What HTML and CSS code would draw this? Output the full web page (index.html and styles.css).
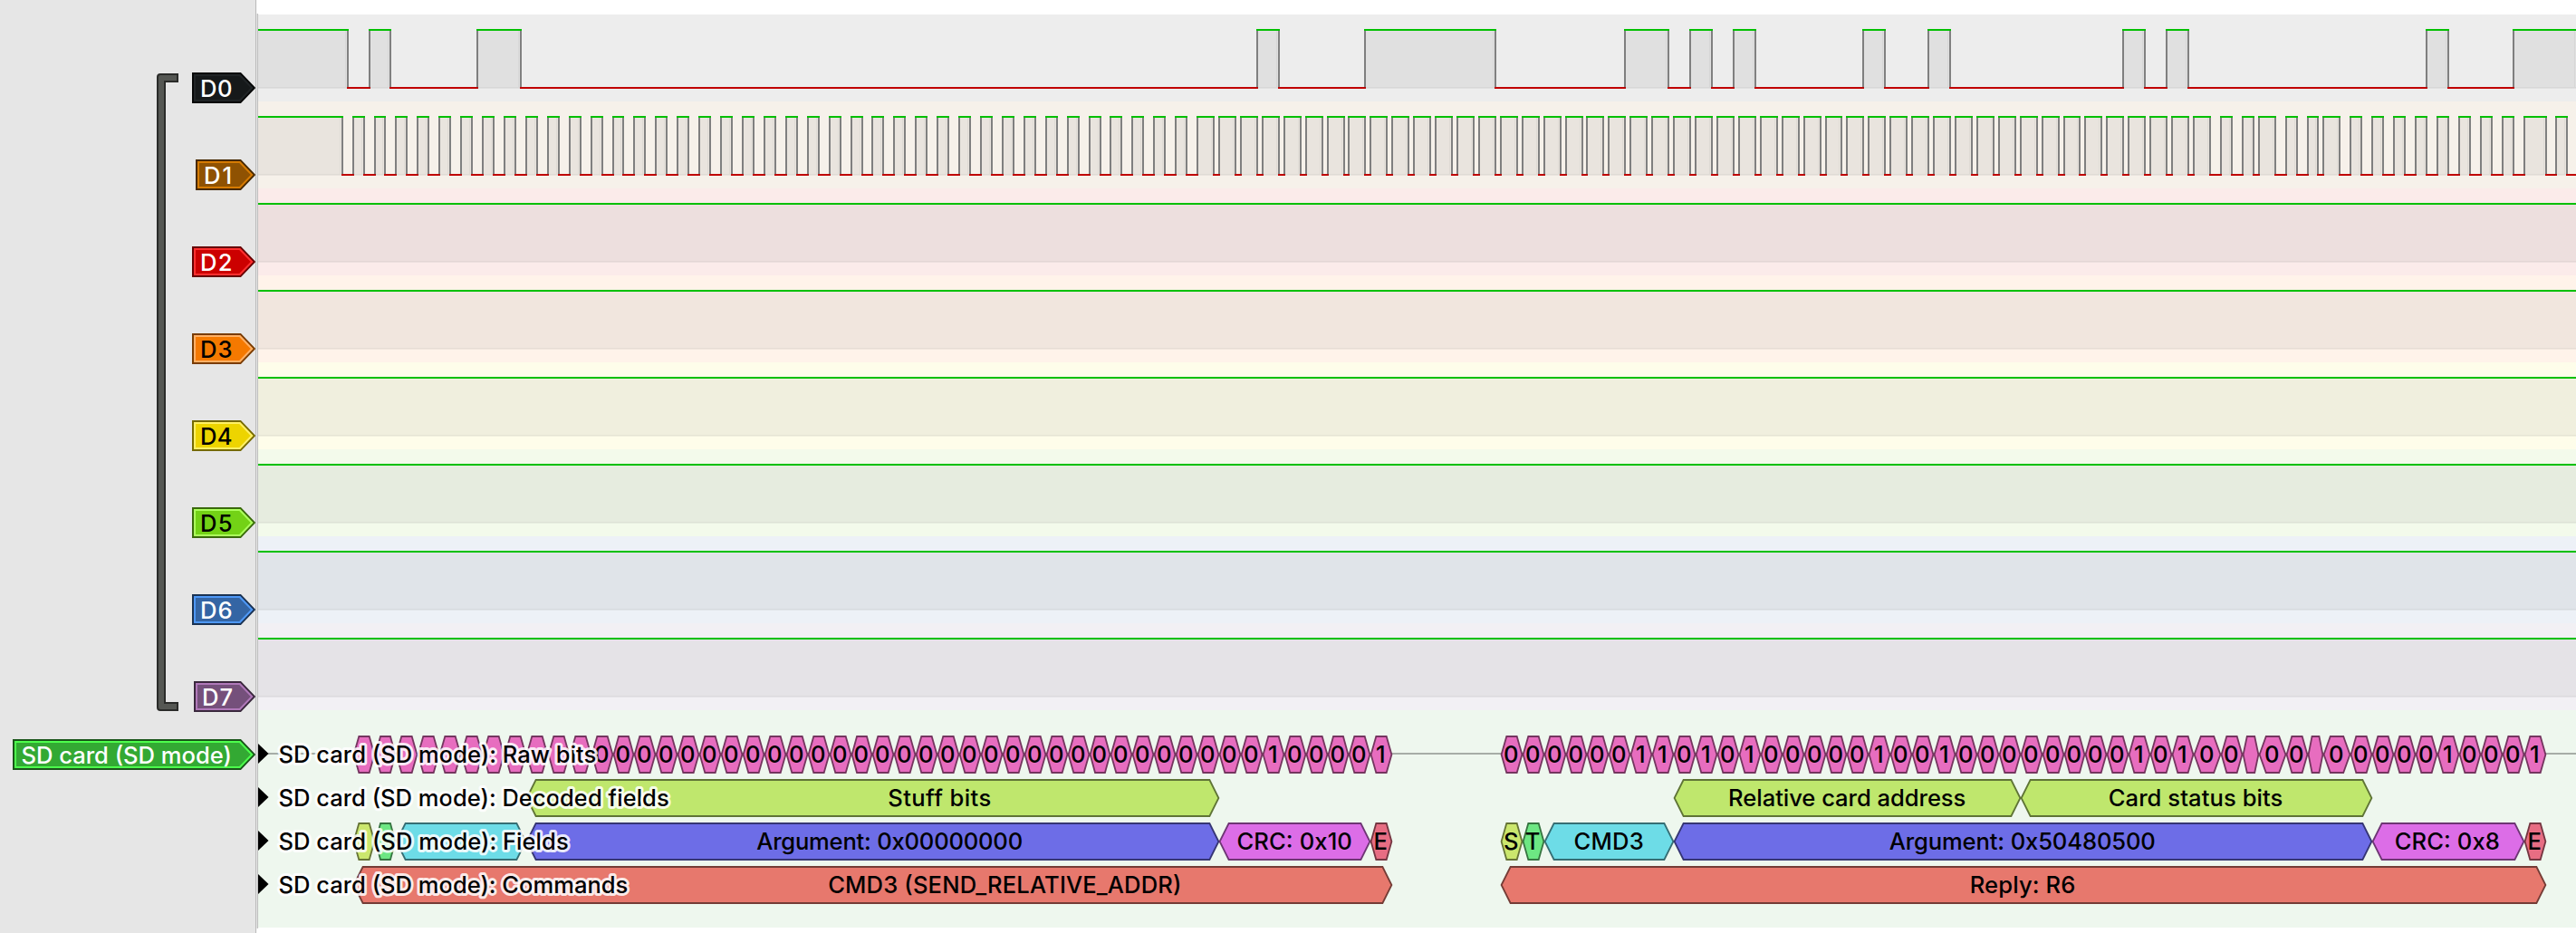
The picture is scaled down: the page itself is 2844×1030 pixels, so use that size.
FILE: index.html
```html
<!DOCTYPE html>
<html lang="en">
<head>
<meta charset="utf-8">
<title>SD card (SD mode)</title>
<link rel="stylesheet" href="styles.css">
</head>
<body>
<main class="viewer">
  <aside class="headers">
    <svg class="bracket" width="26" height="706" viewBox="172 80 26 706">
      <path d="M196 82V90H182V776H196V784H177Q174 784 174 781V85Q174 82 177 82Z"/>
    </svg>
    <div class="tags" id="tags"></div>
  </aside>
  <section class="view" id="view"></section>
</main>
<script src="app.js"></script>
</body>
</html>
```
FILE: styles.css
```css
body {
  margin: 0;
  background: #fff;
  font-family: Inter, "Liberation Sans", sans-serif;
  overflow: hidden;
}
svg {
  display: block;
}
text {
  font-size: 25.6px;
  white-space: pre;
}
.viewer {
  display: flex;
  height: 1030px;
}
.headers {
  display: flex;
  flex: none;
  box-sizing: border-box;
  width: 283px;
  background: #e6e6e6;
  border-right: 1px solid #b9b9b9;
}
.bracket {
  flex: none;
  margin: 80px 0 0 172px;
}
.bracket path {
  fill: #555753;
  stroke: #2a2b29;
  stroke-width: 2;
}
.tags {
  display: flex;
  flex-direction: column;
  align-items: flex-end;
  width: 84px;
  padding-top: 49px;
}
.tag {
  display: flex;
  flex: none;
  align-items: center;
  height: 96px;
}
.tag-decoder {
  height: 32px;
}
.tag text {
  font-weight: 500;
}
.view {
  flex: 1;
  box-sizing: border-box;
  margin: 15px 0 5px 1px;
  padding: 1px 0;
  border-left: 1px solid #bdbdbd;
  box-shadow: -1px 0 0 #e9e9e9;
}
.high {
  fill: #00c000;
}
.low {
  fill: #c00000;
}
.edge {
  fill: #808080;
}
.shade {
  fill: rgba(115, 122, 115, .1);
}
.base {
  fill: rgba(0, 0, 0, .04);
}
.decoder {
  background: #eef7ee;
}
.idle {
  fill: #a6ada6;
}
.field {
  stroke-width: 1.8;
}
.decoder text {
  font-weight: 450;
}
.row-title {
  stroke: #fff;
  stroke-opacity: .85;
  stroke-width: 6;
  stroke-linejoin: round;
  paint-order: stroke;
}
```
FILE: app.js
```js
const LEFT = 285, WIDTH = 2559;

// name, tag left edge, fill, highlight, outline, text colour, lane background
const channels = [
  ["D0", 212, "#16191a", "#202426", "#060707", "#fff", "#ededed"],
  ["D1", 216, "#8f5202", "#d67b03", "#472901", "#fff", "#f6f1ea"],
  ["D2", 212, "#cc0000", "#ff3030", "#660000", "#fff", "#fbebea"],
  ["D3", 212, "#f57900", "#ffb066", "#7a3c00", "#000", "#fff3ea"],
  ["D4", 212, "#edd400", "#fff066", "#766a00", "#000", "#fefdea"],
  ["D5", 212, "#73d216", "#acff5c", "#39690b", "#000", "#f3faeb"],
  ["D6", 212, "#3465a4", "#4e98f6", "#1a3252", "#fff", "#edf1f7"],
  ["D7", 214, "#75507b", "#b078b9", "#3a283d", "#fff", "#f2f0f4"]
];

// Alternating falling / rising edge positions; every line starts high.
const d0 = [383, 407, 430, 526, 574, 1387, 1411, 1506, 1650, 1793, 1841, 1865, 1889, 1913, 1937,
  2056, 2080, 2128, 2152, 2343, 2367, 2391, 2415, 2678, 2702, 2774];
const rises = [389, 413, 436, 460, 484, 508, 532, 556, 580, 604, 628, 652, 676, 699, 723, 747, 771, 795,
  819, 843, 867, 891, 915, 939, 962, 986, 1010, 1034, 1058, 1082, 1106, 1130, 1154, 1178, 1202, 1225,
  1249, 1273, 1297, 1321, 1345, 1369, 1393, 1417, 1441, 1465, 1488, 1512, 1536, 1560, 1584, 1608, 1632,
  1656, 1680, 1704, 1728, 1751, 1775, 1799, 1823, 1847, 1871, 1895, 1919, 1943, 1967, 1991, 2015, 2038,
  2062, 2086, 2110, 2134, 2158, 2182, 2206, 2230, 2254, 2278, 2301, 2325, 2349, 2373, 2397, 2421, 2451,
  2475, 2493, 2523, 2547, 2564, 2594, 2618, 2642, 2666, 2690, 2714, 2738, 2762, 2786, 2821];
const falls = [377, 401, 424, 448, 472, 496, 520, 544, 568, 592, 616, 640, 664, 687, 711, 735, 759, 783,
  807, 831, 855, 879, 903, 927, 951, 974, 998, 1022, 1046, 1070, 1094, 1118, 1142, 1166, 1190, 1214,
  1237, 1261, 1285, 1309, 1339, 1363, 1387, 1411, 1435, 1459, 1483, 1506, 1530, 1554, 1578, 1602, 1626,
  1650, 1674, 1698, 1722, 1746, 1769, 1793, 1817, 1841, 1865, 1889, 1913, 1937, 1961, 1985, 2009, 2032,
  2056, 2080, 2104, 2128, 2152, 2176, 2200, 2224, 2248, 2272, 2295, 2319, 2343, 2367, 2391, 2415, 2439,
  2463, 2487, 2511, 2535, 2558, 2582, 2606, 2630, 2654, 2678, 2702, 2726, 2750, 2774, 2810, 2833];
const d1 = [...falls, ...rises].sort((a, b) => a - b);

const rect = (cls, x, y, w, h) => `<rect class="${cls}" x="${x}" y="${y}" width="${w}" height="${h}"/>`;

function wave(edges) {
  let out = "", start = LEFT, high = true;
  for (const edge of [...edges, LEFT + WIDTH]) {
    if (high) {
      out += rect("shade", start, 18, edge - start, 64) + rect("base", start, 80, edge - start, 1);
      if (edges.length) out += rect("base", edge - 2, 18, 1, 62);
      out += rect("high", start, 16, edge + 2 - start, 2);
    } else {
      out += rect("low", start, 80, edge + 2 - start, 2);
    }
    if (edge < LEFT + WIDTH) out += rect("edge", edge, 18, 2, 62);
    start = edge;
    high = !high;
  }
  return out;
}

function tag(cls, name, left, fill, light, dark, ink, textX, length) {
  const shape = (i, tip) => {
    const shoulder = 265.5 - (i - 1) * .4;
    return `M${left + i} ${i}H${shoulder}L${tip} 17L${shoulder} ${34 - i}H${left + i}Z`;
  };
  return `<div class="tag ${cls}"><svg width="${282 - left}" height="34" viewBox="${left} 0 ${282 - left} 34">` +
    `<path d="${shape(1, 280.8)}" fill="${fill}" stroke="${dark}" stroke-width="2"/>` +
    `<path d="${shape(3, 278.2)}" fill="none" stroke="${light}" stroke-width="2"/>` +
    `<text x="${textX}" y="27" fill="${ink}" textLength="${length}">${name}</text></svg></div>`;
}

document.getElementById("tags").innerHTML =
  channels.map(([n, x, f, l, d, ink]) => tag("", n, x, f, l, d, ink, x + 9, n === "D1" ? 31 : n === "D7" ? 34 : 35.5)).join("") +
  tag("tag-decoder", "SD card (SD mode)", 14, "#33a933", "#4cff4c", "#195419", "#fff", 23.4, 232.5);

const colours = {
  pink: ["#e76dbf", "#74365f"], lime: ["#bfe76d", "#5f7436"], start: ["#cbe76d", "#667436"],
  green: ["#6de783", "#367441"], cyan: ["#6ddce7", "#366e74"], blue: ["#6d6de7", "#363674"],
  purple: ["#dc6de7", "#6e3674"], red: ["#e76d83", "#743641"], coral: ["#e7786d", "#743c36"]
};

function field(colour, from, to, y, label, inkFrom, inkTo) {
  const a = from + 1.6, b = to + .4, cap = Math.min((b - a) / 4, 10);
  const [fill, stroke] = colours[colour];
  let out = `<polygon class="field" fill="${fill}" stroke="${stroke}" points="${a},${y} ${a + cap},${y - 20} ${b - cap},${y - 20} ${b},${y} ${b - cap},${y + 20} ${a + cap},${y + 20}"/>`;
  if (label && inkTo) {
    out += `<text x="${inkFrom - 1.3}" y="${y + 9}" textLength="${inkTo - inkFrom + 3.2}">${label}</text>`;
  } else if (label) {
    out += `<text x="${(from + to) / 2 + .2}" y="${y + 9}" text-anchor="middle">${label}</text>`;
  }
  return out;
}

// One hexagon per clock period; "." is a bit too narrow or covered to be labelled.
function bits(first, values, end) {
  const i = rises.indexOf(first);
  return [...values].map((v, n) =>
    field("pink", rises[i + n], n === 47 ? end : rises[i + n + 1], 833, v === "." ? "" : v)).join("");
}

const title = (name, y, end) =>
  `<path d="M285 ${y - 12}L296.5 ${y - 1}L285 ${y + 10}Z"/>` +
  `<text class="row-title" x="307.4" y="${y + 9}" textLength="${end - 306}">SD card (SD mode): ${name}</text>`;

const decoder = rect("idle", 285, 831, 2559, 2) +
  bits(389, ".".repeat(11) + "0".repeat(31) + "100001", 1536) +
  bits(1656, "00000011010100000100100000000101" + "00.00.00" + "00010001", 2810) +
  field("lime", 580, 1345, 881, "Stuff bits", 981.6, 1092.3) +
  field("lime", 1847, 2230, 881, "Relative card address", 1909.4, 2168.5) +
  field("lime", 2230, 2618, 881, "Card status bits", 2329, 2518.5) +
  field("start", 389, 413, 929) +
  field("green", 413, 436, 929) +
  field("cyan", 436, 580, 929) +
  field("blue", 580, 1345, 929, "Argument: 0x00000000", 836.5, 1127.3) +
  field("purple", 1345, 1512, 929, "CRC: 0x10", 1366.7, 1491) +
  field("red", 1512, 1536, 929, "E") +
  field("start", 1656, 1680, 929, "S") +
  field("green", 1680, 1704, 929, "T") +
  field("cyan", 1704, 1847, 929, "CMD3", 1738.7, 1812.9) +
  field("blue", 1847, 2618, 929, "Argument: 0x50480500", 2087, 2378) +
  field("purple", 2618, 2786, 929, "CRC: 0x8", 2645, 2758) +
  field("red", 2786, 2810, 929, "E") +
  field("coral", 389, 1536, 977, "CMD3 (SEND_RELATIVE_ADDR)", 915.5, 1302.6) +
  field("coral", 1656, 2810, 977, "Reply: R6", 2176, 2289.5) +
  title("Raw bits", 833, 657) +
  title("Decoded fields", 881, 737.3) +
  title("Fields", 929, 626.3) +
  title("Commands", 977, 692);

document.getElementById("view").innerHTML =
  channels.map((c, i) =>
    `<svg class="lane" style="background:${c[6]}" width="${WIDTH}" height="96" viewBox="${LEFT} 0 ${WIDTH} 96">${wave(i === 0 ? d0 : i === 1 ? d1 : [])}</svg>`).join("") +
  `<svg class="decoder" width="${WIDTH}" height="240" viewBox="${LEFT} 784 ${WIDTH} 240">${decoder}</svg>`;
```
